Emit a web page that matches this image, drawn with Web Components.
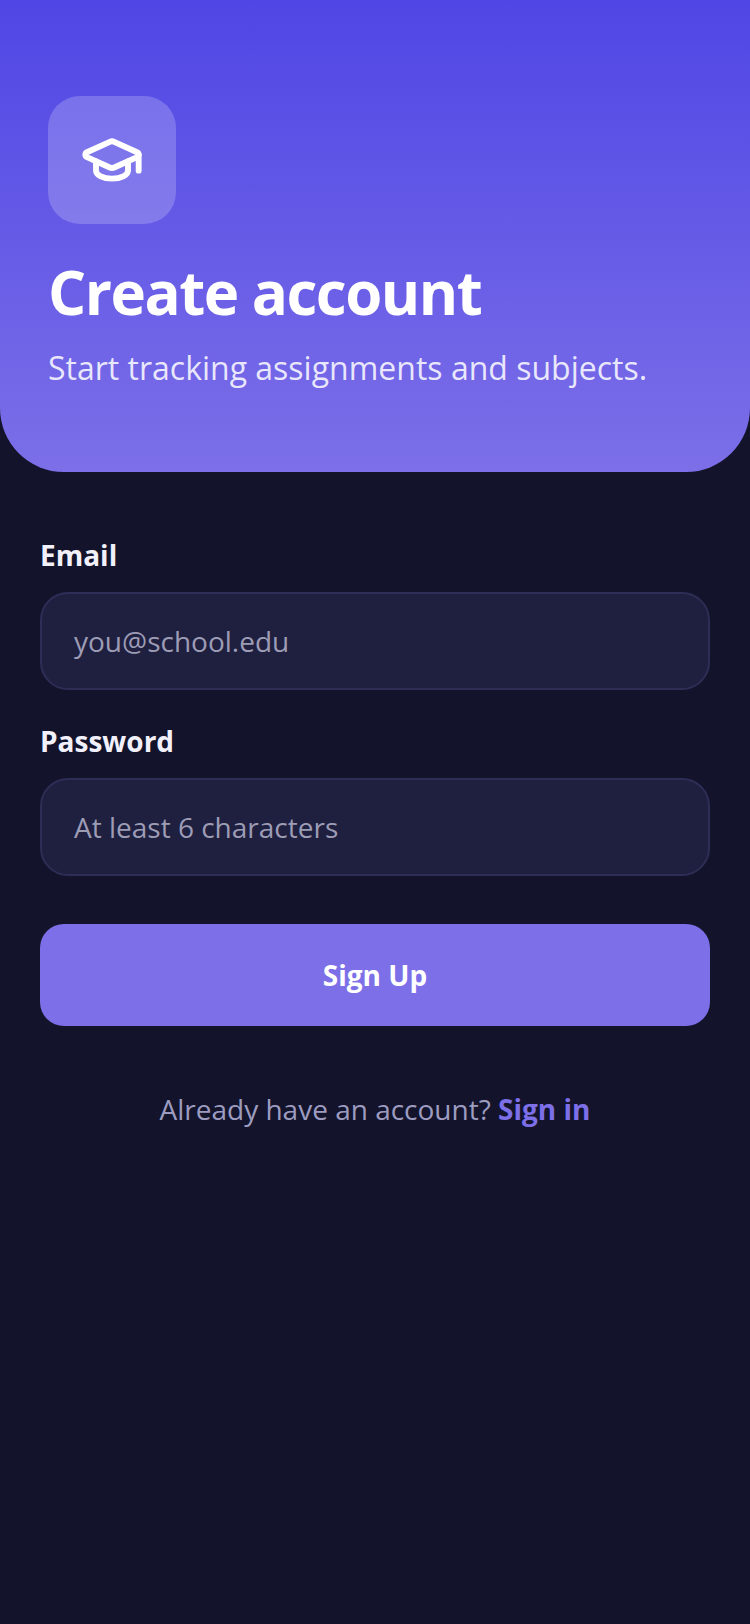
<!DOCTYPE html>
<html>
<head>
<meta charset="utf-8">
<style>
  html, body { margin: 0; background: #13142b; }
  body { font-family: "Open Sans", sans-serif; }
</style>
</head>
<body>
<signup-screen></signup-screen>
<script>
class SignupHeader extends HTMLElement {
    constructor() {
        super();
        this.attachShadow({ mode: "open" });
        this.shadowRoot.innerHTML = `
            <style>
                :host { display: block; height: 472px; box-sizing: border-box; padding: 96px 48px 0; background: linear-gradient(180deg, #4f46e5, #7c6fe8); border-radius: 0 0 64px 64px; }
                .logo { width: 128px; height: 128px; border-radius: 32px; background: rgba(255,255,255,.2); display: flex; align-items: center; justify-content: center; }
                h1 { margin: 32px 0 0; font-size: 60px; line-height: 72px; font-weight: 700; color: #fff; letter-spacing: -1.5px; }
                p { margin: 18px 0 0; font-size: 32px; line-height: 44px; color: rgba(255,255,255,.85); }
            </style>
            <div class="logo">
                <svg width="64" height="64" viewBox="0 0 24 24" fill="none" stroke="#fff" stroke-width="2.2" stroke-linecap="round" stroke-linejoin="round">
                    <path d="M21.42 10.922a1 1 0 0 0-.019-1.838L12.83 5.18a2 2 0 0 0-1.66 0L2.6 9.08a1 1 0 0 0 0 1.832l8.57 3.908a2 2 0 0 0 1.66 0z"/>
                    <path d="M22 10v6"/>
                    <path d="M6 12.5V16a6 3 0 0 0 12 0v-3.5"/>
                </svg>
            </div>
            <h1><slot name="title"></slot></h1>
            <p><slot name="subtitle"></slot></p>
        `;
    }
}

class FormField extends HTMLElement {
    constructor() {
        super();
        this.attachShadow({ mode: "open" });
        this.shadowRoot.innerHTML = `
            <style>
                :host { display: block; }
                label { display: block; font-size: 28px; line-height: 38px; font-weight: 700; color: #f1f0fb; margin-bottom: 18px; }
                .box { height: 98px; box-sizing: border-box; border: 2px solid #2e2d55; border-radius: 28px; background: #1f1f40; padding: 0 32px; display: flex; align-items: center; font-size: 28px; color: #9d9cb5; }
            </style>
            <label>${this.getAttribute("label")}</label>
            <div class="box">${this.getAttribute("placeholder")}</div>
        `;
    }
}

class SignupScreen extends HTMLElement {
    constructor() {
        super();
        this.attachShadow({ mode: "open" });
        this.shadowRoot.innerHTML = `
            <style>
                :host { display: block; min-height: 1624px; background: #13142b; }
                form { display: flex; flex-direction: column; padding: 64px 40px 0; }
                form-field + form-field { margin-top: 32px; }
                .btn { margin-top: 48px; height: 102px; border-radius: 24px; background: #7c6fe8; color: #fff; font-size: 28px; font-weight: 700; display: flex; align-items: center; justify-content: center; }
                .foot { margin-top: 63px; text-align: center; font-size: 28px; line-height: 40px; color: #9d9cc0; }
                .foot b { color: #7c6fe8; font-weight: 700; }
            </style>
            <signup-header>
                <span slot="title">Create account</span>
                <span slot="subtitle">Start tracking assignments and subjects.</span>
            </signup-header>
            <form>
                <form-field label="Email" placeholder="you@school.edu"></form-field>
                <form-field label="Password" placeholder="At least 6 characters"></form-field>
                <div class="btn">Sign Up</div>
                <div class="foot">Already have an account? <b>Sign in</b></div>
            </form>
        `;
    }
}

customElements.define("signup-header", SignupHeader);
customElements.define("form-field", FormField);
customElements.define("signup-screen", SignupScreen);
</script>
</body>
</html>
